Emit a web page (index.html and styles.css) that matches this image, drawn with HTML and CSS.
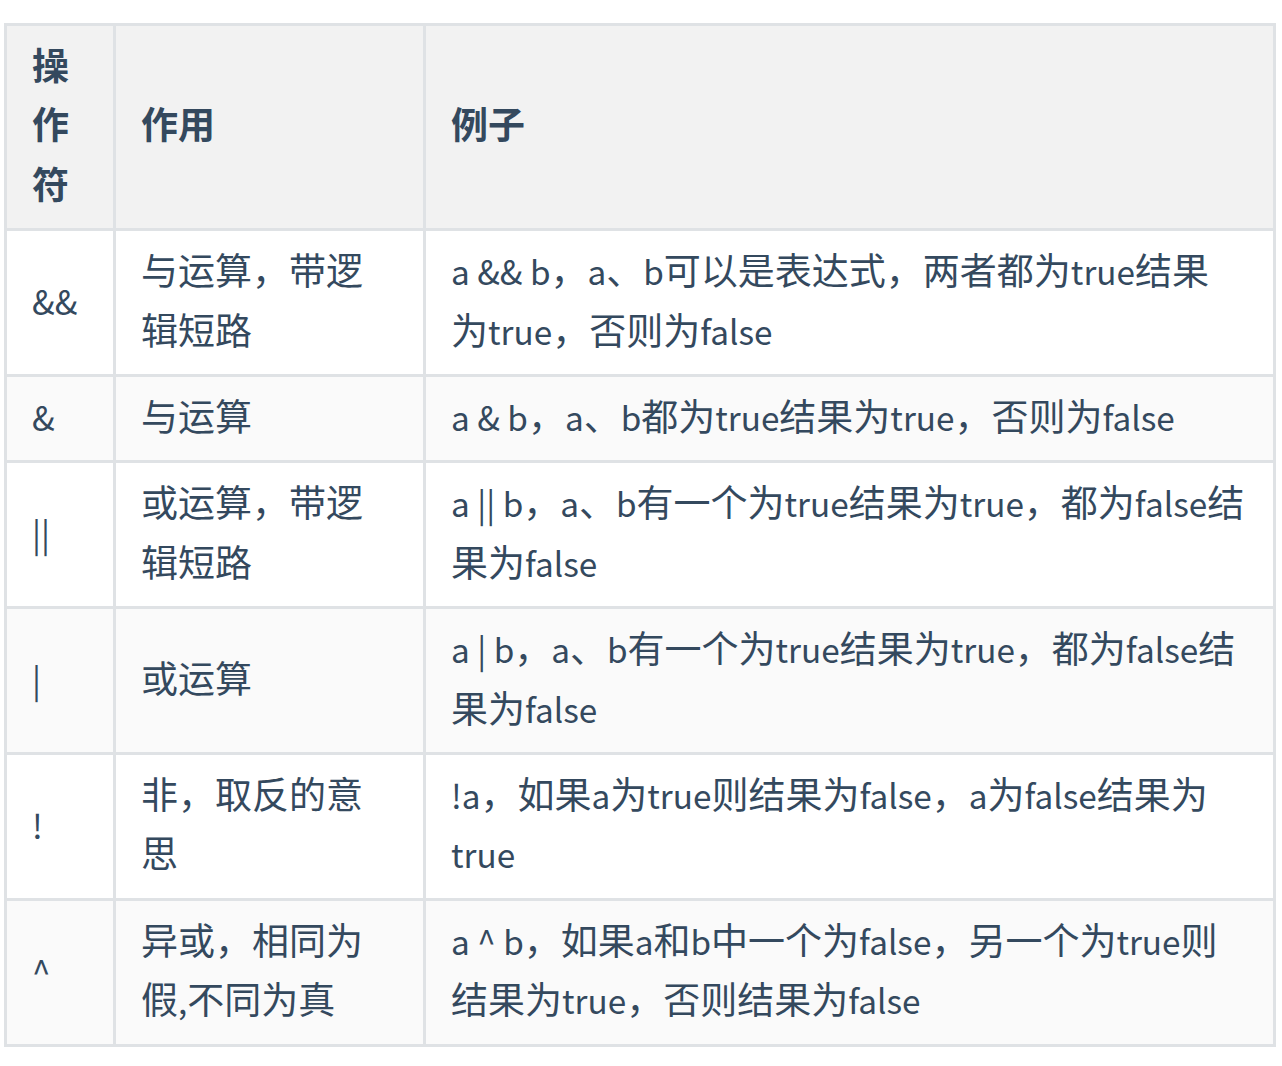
FILE: index.html
```html
<!DOCTYPE html>
<html lang="zh-CN">
<head>
<meta charset="utf-8">
<title>运算符</title>
<link rel="stylesheet" href="styles.css">
</head>
<body>
<div class="page">
<table class="ops">
  <thead>
    <tr>
      <th class="c1">操作符</th>
      <th class="c2">作用</th>
      <th class="c3">例子</th>
    </tr>
  </thead>
  <tbody>
    <tr>
      <td class="c1"><span class="en">&amp;&amp;</span></td>
      <td class="c2">与运算，带逻辑短路</td>
      <td class="c3"><span class="en">a &amp;&amp; b</span>，<span class="en">a</span>、<span class="en">b</span>可以是表达式，两者都为<span class="en">true</span>结果<span class="nw">为<span class="en">true</span></span>，否则为<span class="en">false</span></td>
    </tr>
    <tr>
      <td class="c1"><span class="en">&amp;</span></td>
      <td class="c2">与运算</td>
      <td class="c3"><span class="en">a &amp; b</span>，<span class="en">a</span>、<span class="en">b</span>都为<span class="en">true</span>结果为<span class="en">true</span>，否则为<span class="en">false</span></td>
    </tr>
    <tr>
      <td class="c1"><span class="en">||</span></td>
      <td class="c2">或运算，带逻辑短路</td>
      <td class="c3"><span class="en">a || b</span>，<span class="en">a</span>、<span class="en">b</span>有一个为<span class="en">true</span>结果为<span class="en">true</span>，都为<span class="en">false</span>结果为<span class="en">false</span></td>
    </tr>
    <tr>
      <td class="c1"><span class="en">|</span></td>
      <td class="c2">或运算</td>
      <td class="c3"><span class="en">a | b</span>，<span class="en">a</span>、<span class="en">b</span>有一个为<span class="en">true</span>结果为<span class="en">true</span>，都为<span class="en">false</span>结果为<span class="en">false</span></td>
    </tr>
    <tr>
      <td class="c1"><span class="en">!</span></td>
      <td class="c2">非，取反的意思</td>
      <td class="c3"><span class="en">!a</span>，如果<span class="en">a</span>为<span class="en">true</span>则结果为<span class="en">false</span>，<span class="en">a</span>为<span class="en">false</span>结果为<span class="en">true</span></td>
    </tr>
    <tr>
      <td class="c1"><span class="en">^</span></td>
      <td class="c2">异或，相同为假<span class="en">,</span>不同为真</td>
      <td class="c3"><span class="en">a ^ b</span>，如果<span class="en">a</span>和<span class="en">b</span>中一个为<span class="en">false</span>，另一个为<span class="en">true</span>则结果为<span class="en">true</span>，否则结果为<span class="en">false</span></td>
    </tr>
  </tbody>
</table>
</div>
</body>
</html>
```
FILE: styles.css
```css
html, body {
  margin: 0;
  padding: 0;
  background: #ffffff;
}

.page {
  padding: 23px 0 0 4px;
}

.ops {
  border-collapse: separate;
  border-spacing: 0;
  table-layout: fixed;
  width: 1272px;
  border-left: 3px solid #dfe2e5;
  border-top: 3px solid #dfe2e5;
  font-family: "Noto Sans CJK SC", "Noto Sans", sans-serif;
  font-size: 37px;
  line-height: 59.4px;
  color: #34495e;
}

.ops th,
.ops td {
  box-sizing: border-box;
  border-right: 3px solid #dfe2e5;
  border-bottom: 3px solid #dfe2e5;
  padding: 9px 27px 15px 25px;
  text-align: left;
  vertical-align: middle;
}

.ops th {
  font-weight: 700;
  background: #f2f2f2;
}

.ops td {
  font-weight: 400;
}

.ops .en {
  font-size: 33.3px;
  line-height: 1;
}

.ops .nw {
  white-space: nowrap;
}

.ops .c1 { width: 109px; }
.ops .c2 { width: 310px; }
.ops .c3 { width: 850px; }

.ops tbody tr:nth-child(odd) { background: #ffffff; }
.ops tbody tr:nth-child(even) { background: #fafafa; }
```
